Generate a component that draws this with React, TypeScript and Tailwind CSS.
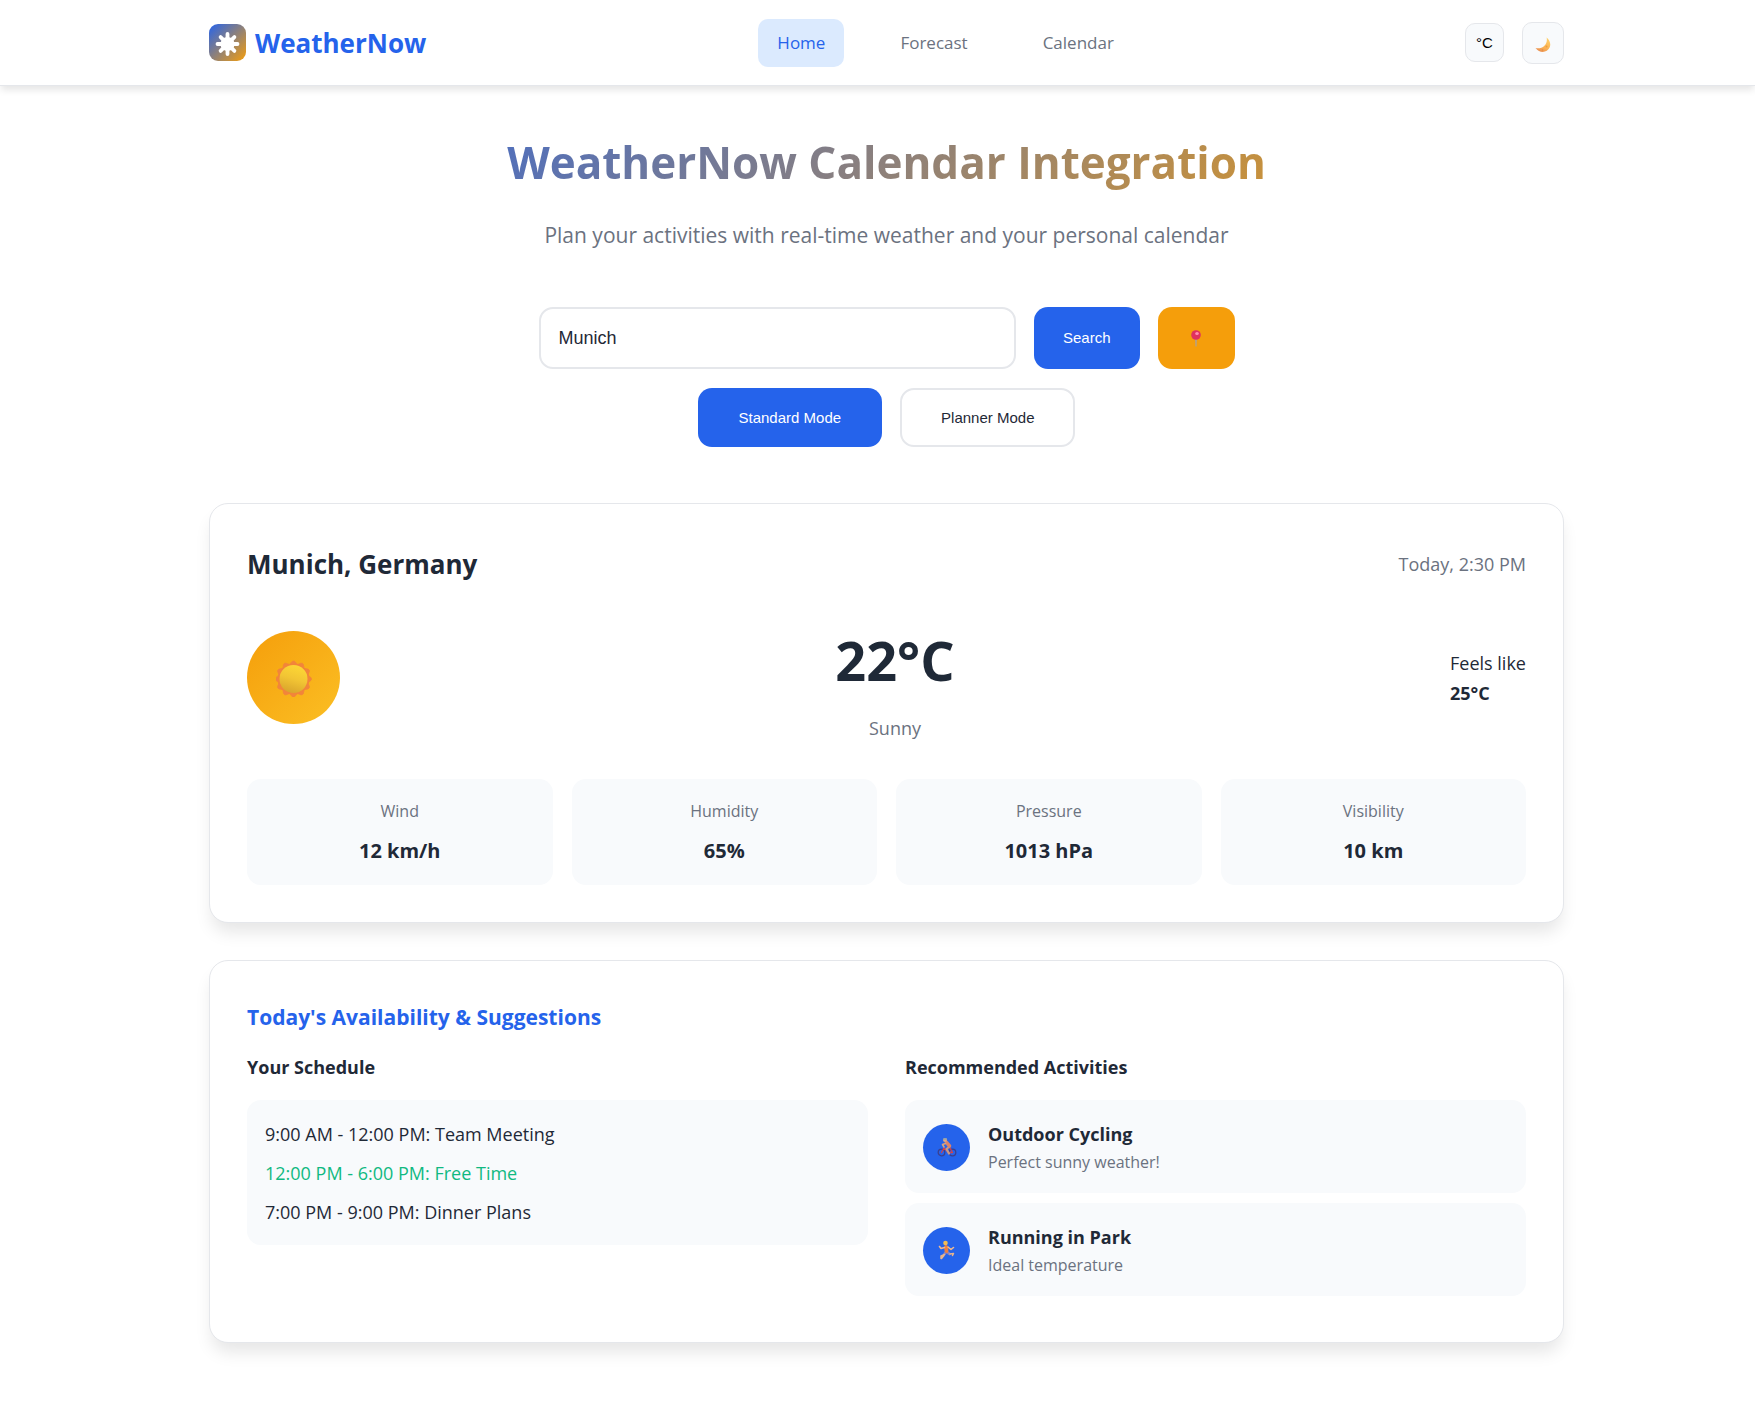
import React, { useState } from 'react';

const stats = [
  { label: 'Wind', value: '12 km/h' },
  { label: 'Humidity', value: '65%' },
  { label: 'Pressure', value: '1013 hPa' },
  { label: 'Visibility', value: '10 km' },
];

const schedule = [
  { text: '9:00 AM - 12:00 PM: Team Meeting', free: false },
  { text: '12:00 PM - 6:00 PM: Free Time', free: true },
  { text: '7:00 PM - 9:00 PM: Dinner Plans', free: false },
];

function LogoMark() {
  return (
    <svg viewBox="0 0 37 37" className="size-[37px]" aria-hidden="true">
      <defs>
        <linearGradient id="logo-fill" x1="0" y1="0" x2="1" y2="1">
          <stop offset="0" stopColor="#2563eb" />
          <stop offset="1" stopColor="#f59e0b" />
        </linearGradient>
      </defs>
      <rect width="37" height="37" rx="9" fill="url(#logo-fill)" />
      <circle cx="18.5" cy="20" r="7" fill="#fff" />
      <path
        d="M18.5 10v20M8.500 20h20M11.600 13.100l13.800 13.800M25.400 13.100L11.600 26.900"
        stroke="#fff"
        strokeWidth="3.800"
        strokeLinecap="round"
      />
    </svg>
  );
}

function Moon() {
  return (
    <svg viewBox="0 0 16 16" className="size-4" aria-hidden="true">
      <defs>
        <linearGradient id="moon-fill" x1="0.8" y1="0" x2="0.3" y2="1">
          <stop offset="0" stopColor="#ffd26a" />
          <stop offset="0.6" stopColor="#fbb454" />
          <stop offset="1" stopColor="#e98f52" />
        </linearGradient>
      </defs>
      <path d="M11.6.4c3.2 2.500 4.600 6.700 3 10.200-2.200 5-9.600 6.400-14.100.500 3.200.7 6.600 0 8.900-2.300 2.200-2.300 2.900-5.400 2.200-8.400z" fill="url(#moon-fill)" />
      <circle cx="11.500" cy="9.500" r="1" fill="#e99d45" />
      <circle cx="7.500" cy="13" r=".8" fill="#e08d45" />
    </svg>
  );
}

function Pin() {
  return (
    <svg viewBox="0 0 10 17" className="h-[17px] w-[10px]" aria-hidden="true">
      <path d="M4 8h2l-.4 8.500H4.400z" fill="#b3a189" />
      <circle cx="5" cy="5" r="4.800" fill="#e0315f" />
      <ellipse cx="6" cy="3.500" rx="1.800" ry="1.500" fill="#ff8db0" />
    </svg>
  );
}

function Sun() {
  const petals = Array.from({ length: 12 }, (_, i) => i * 30);
  return (
    <svg viewBox="0 0 36 38" className="h-[38px] w-9" aria-hidden="true">
      <defs>
        <linearGradient id="sun-fill" x1="0.7" y1="0" x2="0.4" y2="1">
          <stop offset="0" stopColor="#fdd835" />
          <stop offset="0.5" stopColor="#f2c534" />
          <stop offset="1" stopColor="#d9a52c" />
        </linearGradient>
      </defs>
      <circle cx="17.500" cy="20" r="15.600" fill="#f2853a" />
      {petals.map((deg) => (
        <path
          key={deg}
          d="M13 5.800C15 5 15.400 2 17.500 2s2.500 3 4.500 3.800z"
          fill="#f2853a"
          stroke="#f2853a"
          strokeWidth="0.800"
          strokeLinejoin="round"
          transform={`rotate(${deg} 17.500 20)`}
        />
      ))}
      <circle cx="17.500" cy="20" r="14" fill="url(#sun-fill)" />
    </svg>
  );
}

function Cyclist() {
  return (
    <svg viewBox="0 0 20 20" className="size-5" fill="none" strokeLinecap="round" strokeLinejoin="round" aria-hidden="true">
      <circle cx="4.500" cy="15.500" r="3.300" stroke="#3b3f8f" strokeWidth="1.300" />
      <circle cx="15.500" cy="15.500" r="3.300" stroke="#3b3f8f" strokeWidth="1.300" />
      <path d="M4.500 15.500L7 11l4.500 4.500h4L12.500 10" stroke="#d0434f" strokeWidth="1.300" />
      <path d="M12.500 9.500l-3 2.500 2.500 4.500" stroke="#c79a86" strokeWidth="2.200" />
      <path d="M9.500 5.500l3 3.500" stroke="#dd8468" strokeWidth="3.600" />
      <path d="M8.500 6.500L5.500 7.500l1.500 2.500" stroke="#d9a27e" strokeWidth="1.600" />
      <circle cx="8" cy="3" r="2" fill="#e0a884" />
      <path d="M5.800 2.800C6 .6 9.500.2 10.300 2.400z" fill="#8fa3ae" />
    </svg>
  );
}

function Runner() {
  return (
    <svg viewBox="0 0 20 20" className="size-5" fill="none" strokeLinecap="round" strokeLinejoin="round" aria-hidden="true">
      <path d="M9 12l-1.500 2M10 12l2.500 2" stroke="#8a83c4" strokeWidth="2.800" />
      <path d="M7.500 14.500L4 16v2.500M13 14l3.500-.5-1 2M7 15.500l-2.500 3" stroke="#e8b48c" strokeWidth="1.500" />
      <path d="M9 7l.5 4" stroke="#f0803c" strokeWidth="3.800" />
      <path d="M7.500 7.500L4 8.500 2.500 6.500M11 7l3 2.500 2.500-2" stroke="#f0b98f" strokeWidth="1.600" />
      <circle cx="8.500" cy="3" r="2.300" fill="#f2bd55" />
    </svg>
  );
}

const activities = [
  { title: 'Outdoor Cycling', note: 'Perfect sunny weather!', icon: <Cyclist /> },
  { title: 'Running in Park', note: 'Ideal temperature', icon: <Runner /> },
];

const cardClass =
  'rounded-[19px] border border-[#e5e7eb] bg-white p-[37px] shadow-[0_12px_17px_-3px_rgba(0,0,0,0.1)]';

export default function App() {
  const [city, setCity] = useState('Munich');
  return (
    <div className="min-h-screen bg-white pb-[74px] font-['Open_Sans',sans-serif] text-lg leading-[30px] text-[#1f2937]">
      <header className="border-b border-[#e5e7eb] bg-white pl-[18px] shadow-[0_5px_7px_-1px_rgba(0,0,0,0.1)]">
        <div className="mx-auto flex h-[85px] max-w-[1355px] items-center justify-between">
          <a href="#" className="flex items-center gap-[9px] text-[26px] font-bold text-[#2563eb]">
            <LogoMark />
            WeatherNow
          </a>
          <nav className="flex gap-[37px] text-[17px] text-[#6b7280]">
            <a href="#home" className="rounded-[10px] bg-[#dbeafe] px-[19px] py-[9px] text-[#2563eb]">Home</a>
            <a href="#forecast" className="rounded-[10px] px-[19px] py-[9px]">Forecast</a>
            <a href="#calendar" className="rounded-[10px] px-[19px] py-[9px]">Calendar</a>
          </nav>
          <div className="flex items-center gap-[18px]">
            <button className="size-[39px] rounded-[10px] border border-[#e5e7eb] bg-[#f8fafc] font-['Liberation_Sans',sans-serif] text-[15px] leading-5 text-black">
              °C
            </button>
            <button aria-label="Toggle dark mode" className="flex size-[42px] items-center justify-center rounded-[10px] border border-[#e5e7eb] bg-[#f8fafc] pt-1">
              <Moon />
            </button>
          </div>
        </div>
      </header>

      <main className="pl-[18px]">
        <div className="mx-auto max-w-[1355px]">
          <section className="pt-12 text-center">
            <h1 className="bg-[linear-gradient(135deg,#2563eb,#f59e0b)] bg-clip-text text-[44px] leading-[56px] font-bold text-transparent">
              WeatherNow Calendar Integration
            </h1>
            <p className="mt-[27px] text-[21px] leading-9 text-[#6b7280]">
              Plan your activities with real-time weather and your personal calendar
            </p>
            <form
              onSubmit={(e) => e.preventDefault()}
              className="mx-auto mt-[54px] flex max-w-[696px] gap-[18px] font-['Liberation_Sans',sans-serif] text-[15px]"
            >
              <input
                aria-label="City"
                value={city}
                onChange={(e) => setCity(e.target.value)}
                className="h-[62px] min-w-0 flex-1 rounded-[14px] border-2 border-[#e5e7eb] bg-white px-[18px] text-lg text-[#1f2937] outline-none"
              />
              <button type="submit" className="rounded-[14px] bg-[#2563eb] px-[29px] text-white">Search</button>
              <button type="button" aria-label="Use my location" className="flex w-[77px] items-center justify-center rounded-[14px] bg-[#f59e0b]">
                <Pin />
              </button>
            </form>
            <div className="mt-[19px] flex justify-center gap-[18px] font-['Liberation_Sans',sans-serif] text-[15px]">
              <button className="h-[59px] rounded-[14px] bg-[#2563eb] px-[41px] text-white">Standard Mode</button>
              <button className="h-[59px] rounded-[14px] border-2 border-[#e5e7eb] bg-white px-[39px] text-[#1f2937]">Planner Mode</button>
            </div>
          </section>

          <section className={`mt-14 ${cardClass}`}>
            <div className="flex items-center justify-between">
              <h2 className="text-[26px] leading-[46px] font-bold">Munich, Germany</h2>
              <span className="text-[#6b7280]">Today, 2:30 PM</span>
            </div>
            <div className="mt-[25px] flex items-center justify-between">
              <div className="flex size-[93px] items-center justify-center rounded-full bg-[linear-gradient(135deg,#f59e0b,#fbbf24)]">
                <Sun />
              </div>
              <div className="text-center">
                <div className="text-[54px] leading-[97px] font-bold">22°C</div>
                <div className="mt-1 text-[#6b7280]">Sunny</div>
              </div>
              <div>
                <div>Feels like</div>
                <div className="font-bold">25°C</div>
              </div>
            </div>
            <dl className="mt-9 grid grid-cols-4 gap-[19px] text-center">
              {stats.map((s) => (
                <div key={s.label} className="rounded-[14px] bg-[#f8fafc] py-[19px]">
                  <dt className="text-base leading-[26px] text-[#6b7280]">{s.label}</dt>
                  <dd className="mt-3 text-xl leading-[30px] font-bold">{s.value}</dd>
                </div>
              ))}
            </dl>
          </section>

          <section className={`mt-[37px] ${cardClass}`}>
            <h2 className="text-[21px] leading-[38px] font-bold text-[#2563eb]">Today's Availability &amp; Suggestions</h2>
            <div className="mt-4 grid grid-cols-2 gap-[37px]">
              <div>
                <h3 className="font-bold">Your Schedule</h3>
                <ul className="mt-[18px] flex flex-col gap-[9px] rounded-[14px] bg-[#f8fafc] px-[18px] pt-[19px] pb-[18px]">
                  {schedule.map((s) => (
                    <li key={s.text} className={s.free ? 'text-[#10b981]' : ''}>{s.text}</li>
                  ))}
                </ul>
              </div>
              <div>
                <h3 className="font-bold">Recommended Activities</h3>
                <ul className="mt-[18px] mb-[9px] flex flex-col gap-[10px]">
                  {activities.map((a) => (
                    <li key={a.title} className="flex items-center gap-[18px] rounded-[14px] bg-[#f8fafc] px-[18px] pt-[19px] pb-[18px]">
                      <div className="flex size-[47px] items-center justify-center rounded-full bg-[#2563eb]">{a.icon}</div>
                      <div>
                        <h4 className="font-bold">{a.title}</h4>
                        <p className="text-base leading-[26px] text-[#6b7280]">{a.note}</p>
                      </div>
                    </li>
                  ))}
                </ul>
              </div>
            </div>
          </section>
        </div>
      </main>
    </div>
  );
}
